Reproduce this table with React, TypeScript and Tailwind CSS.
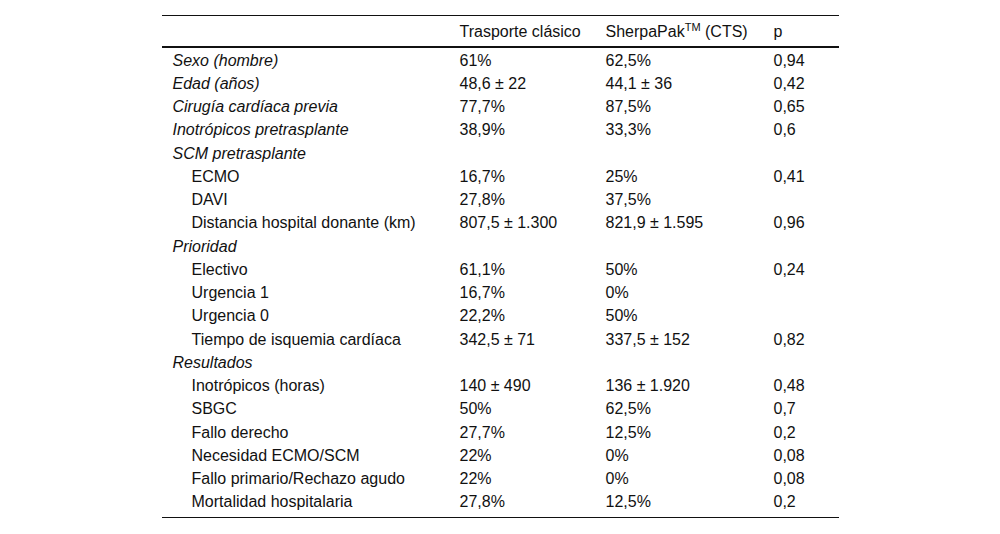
import React from "react";

type Row = { label: string; kind: "main" | "group" | "sub"; a?: string; b?: string; p?: string };

const rows: Row[] = [
  { label: "Sexo (hombre)", kind: "main", a: "61%", b: "62,5%", p: "0,94" },
  { label: "Edad (años)", kind: "main", a: "48,6 ± 22", b: "44,1 ± 36", p: "0,42" },
  { label: "Cirugía cardíaca previa", kind: "main", a: "77,7%", b: "87,5%", p: "0,65" },
  { label: "Inotrópicos pretrasplante", kind: "main", a: "38,9%", b: "33,3%", p: "0,6" },
  { label: "SCM pretrasplante", kind: "group" },
  { label: "ECMO", kind: "sub", a: "16,7%", b: "25%", p: "0,41" },
  { label: "DAVI", kind: "sub", a: "27,8%", b: "37,5%" },
  { label: "Distancia hospital donante (km)", kind: "sub", a: "807,5 ± 1.300", b: "821,9 ± 1.595", p: "0,96" },
  { label: "Prioridad", kind: "group" },
  { label: "Electivo", kind: "sub", a: "61,1%", b: "50%", p: "0,24" },
  { label: "Urgencia 1", kind: "sub", a: "16,7%", b: "0%" },
  { label: "Urgencia 0", kind: "sub", a: "22,2%", b: "50%" },
  { label: "Tiempo de isquemia cardíaca", kind: "sub", a: "342,5 ± 71", b: "337,5 ± 152", p: "0,82" },
  { label: "Resultados", kind: "group" },
  { label: "Inotrópicos (horas)", kind: "sub", a: "140 ± 490", b: "136 ± 1.920", p: "0,48" },
  { label: "SBGC", kind: "sub", a: "50%", b: "62,5%", p: "0,7" },
  { label: "Fallo derecho", kind: "sub", a: "27,7%", b: "12,5%", p: "0,2" },
  { label: "Necesidad ECMO/SCM", kind: "sub", a: "22%", b: "0%", p: "0,08" },
  { label: "Fallo primario/Rechazo agudo", kind: "sub", a: "22%", b: "0%", p: "0,08" },
  { label: "Mortalidad hospitalaria", kind: "sub", a: "27,8%", b: "12,5%", p: "0,2" },
];

const cols = "grid grid-cols-[287px_146px_168px_76px]";

export default function App() {
  return (
    <div className="w-[1000px] h-[534px] bg-white pt-[15px] font-['Liberation_Sans',Arial,sans-serif] text-[16px] leading-[18px] text-[#111]">
      <div className="mx-auto w-[677px] border-t border-[#111] border-b pb-[4px]">
        <div className={`${cols} h-[32px] pt-[2px] items-center border-b-2 border-[#111]`}>
          <div></div>
          <div className="pl-[11px]">Trasporte clásico</div>
          <div className="pl-[11px] whitespace-nowrap">
            SherpaPak<span className="text-[11px] relative top-[-6px]">TM</span> (CTS)
          </div>
          <div className="pl-[11px]">p</div>
        </div>
        {rows.map((r, i) => (
          <div key={i} className={`${cols} h-[23.25px] pt-[2px] items-center`}>
            <div className={r.kind === "sub" ? "pl-[30px]" : "pl-[11px] italic"}>{r.label}</div>
            <div className="pl-[11px]">{r.a ?? ""}</div>
            <div className="pl-[11px]">{r.b ?? ""}</div>
            <div className="pl-[11px]">{r.p ?? ""}</div>
          </div>
        ))}
      </div>
    </div>
  );
}
